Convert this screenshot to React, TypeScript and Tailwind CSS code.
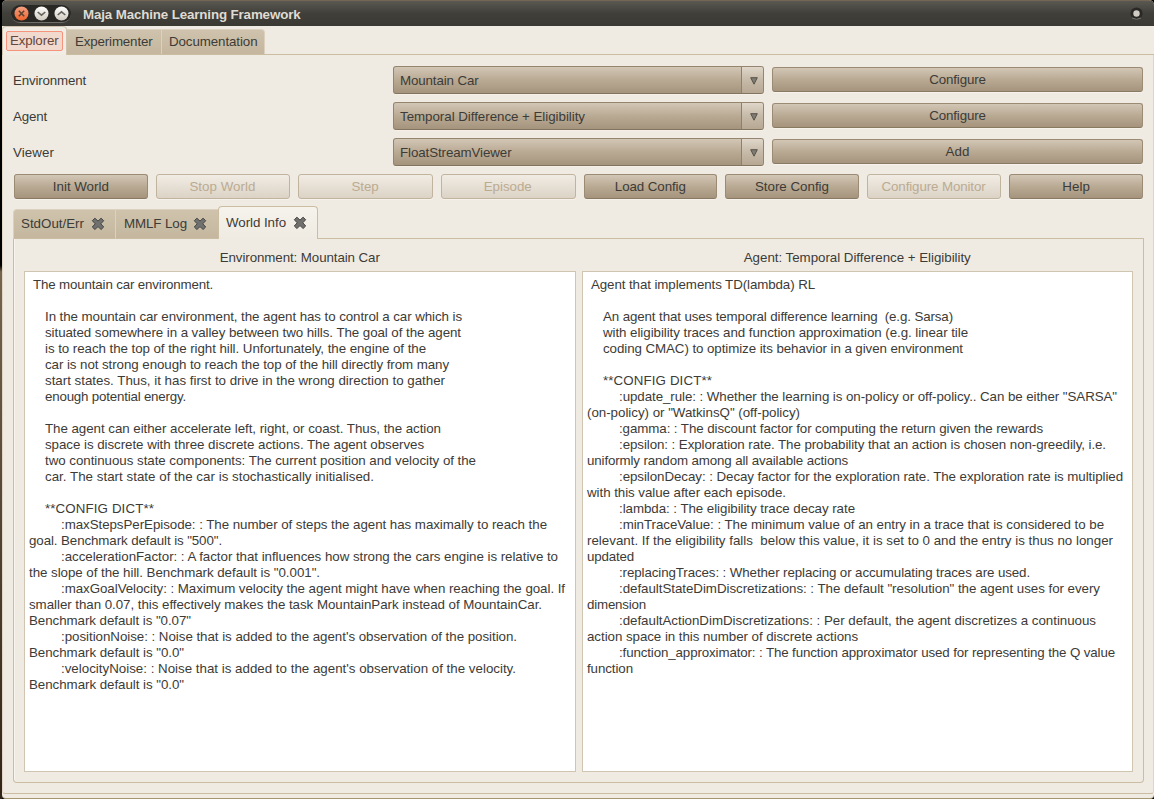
import React, { useLayoutEffect, useRef } from "react";

const envText: [string, number][] = [
  [" The mountain car environment.", 213],
  ["", 0],
  ["    In the mountain car environment, the agent has to control a car which is", 462],
  ["    situated somewhere in a valley between two hills. The goal of the agent", 461],
  ["    is to reach the top of the right hill. Unfortunately, the engine of the", 426],
  ["    car is not strong enough to reach the top of the hill directly from many", 449],
  ["    start states. Thus, it has first to drive in the wrong direction to gather", 445],
  ["    enough potential energy.", 186],
  ["", 0],
  ["    The agent can either accelerate left, right, or coast. Thus, the action", 441],
  ["    space is discrete with three discrete actions. The agent observes", 424],
  ["    two continuous state components: The current position and velocity of the", 476],
  ["    car. The start state of the car is stochastically initialised.", 374],
  ["", 0],
  ["    **CONFIG DICT**", 154],
  ["        :maxStepsPerEpisode: : The number of steps the agent has maximally to reach the", 547],
  ['goal. Benchmark default is "500".', 222],
  ["        :accelerationFactor: : A factor that influences how strong the cars engine is relative to", 558],
  ['the slope of the hill. Benchmark default is "0.001".', 320],
  ["        :maxGoalVelocity: : Maximum velocity the agent might have when reaching the goal. If", 565],
  ["smaller than 0.07, this effectively makes the task MountainPark instead of MountainCar.", 542],
  ['Benchmark default is "0.07"', 191],
  ["        :positionNoise: : Noise that is added to the agent's observation of the position.", 517],
  ['Benchmark default is "0.0"', 184],
  ["        :velocityNoise: : Noise that is added to the agent's observation of the velocity.", 516],
  ['Benchmark default is "0.0"', 184],
];

const agentText: [string, number][] = [
  [" Agent that implements TD(lambda) RL", 815],
  ["", 0],
  ["    An agent that uses temporal difference learning  (e.g. Sarsa)", 953],
  ["    with eligibility traces and function approximation (e.g. linear tile", 968],
  ["    coding CMAC) to optimize its behavior in a given environment", 963],
  ["", 0],
  ["    **CONFIG DICT**", 712],
  ['        :update_rule: : Whether the learning is on-policy or off-policy.. Can be either "SARSA"', 1117],
  ['(on-policy) or "WatkinsQ" (off-policy)', 800],
  ["        :gamma: : The discount factor for computing the return given the rewards", 1043],
  ["        :epsilon: : Exploration rate. The probability that an action is chosen non-greedily, i.e.", 1106],
  ["uniformly random among all available actions", 848],
  ["        :epsilonDecay: : Decay factor for the exploration rate. The exploration rate is multiplied", 1123],
  ["with this value after each episode.", 786],
  ["        :lambda: : The eligibility trace decay rate", 855],
  ["        :minTraceValue: : The minimum value of an entry in a trace that is considered to be", 1104],
  ["relevant. If the eligibility falls  below this value, it is set to 0 and the entry is thus no longer", 1113],
  ["updated", 634],
  ["        :replacingTraces: : Whether replacing or accumulating traces are used.", 1030],
  ['        :defaultStateDimDiscretizations: : The default "resolution" the agent uses for every', 1100],
  ["dimension", 646],
  ["        :defaultActionDimDiscretizations: : Per default, the agent discretizes a continuous", 1096],
  ["action space in this number of discrete actions", 858],
  ["        :function_approximator: : The function approximator used for representing the Q value", 1115],
  ["function", 633],
];

/* A run of text whose tracking is adjusted so that it spans the given width. */
function Fit({ width, children }: { width: number; children: string }) {
  const ref = useRef<HTMLSpanElement>(null);
  useLayoutEffect(() => {
    const el = ref.current;
    if (!el) return;
    el.style.letterSpacing = "0px";
    const natural = el.getBoundingClientRect().width;
    el.style.letterSpacing = (width - natural) / children.length + "px";
  }, [width, children]);
  return (
    <span ref={ref} className="inline-block whitespace-pre">
      {children}
    </span>
  );
}

function TextPane({ lines, left, className }: { lines: [string, number][]; left: number; className: string }) {
  return (
    <div className={"h-[501px] shrink-0 border border-[#cfc5b1] bg-white pl-1 pt-[5px] text-[#3c3b37] " + className}>
      {lines.map(([text, right], i) => {
        const body = text.trimStart();
        const indent = (text.length - body.length) * 4;
        return (
          <div key={i} className="h-4 leading-4" style={{ paddingLeft: indent }}>
            {body && <Fit width={right - left - indent}>{body}</Fit>}
          </div>
        );
      })}
    </div>
  );
}

function Combo({ children }: { children: React.ReactNode }) {
  return (
    <div className="flex h-7 w-[371px] overflow-hidden rounded-[3px] border border-[#95856f] border-b-[#83745f] bg-linear-to-b from-[#d2c6b5] via-[#b9aa94] to-[#a6947d] shadow-[0_1px_0_#f5f1e9]">
      <span className="flex-1 pl-1.5 leading-[27px]">{children}</span>
      <span className="flex w-[22px] items-center justify-center border-l border-[#8f806b] bg-linear-to-b from-[#e0d7ca] via-[#c6baa8] to-[#b7a893] pl-0.5 pt-px">
        <svg width="8" height="8" viewBox="0 0 8 8">
          <path d="M.7.7h6.6L4 7.2z" fill="#817b72" stroke="#56524a" strokeWidth="1" />
        </svg>
      </span>
    </div>
  );
}

function Btn({ children, disabled, className = "" }: { children: React.ReactNode; disabled?: boolean; className?: string }) {
  return (
    <button
      className={
        "h-[25px] rounded-[3px] border text-center leading-[22px] shadow-[0_1px_0_#f7f3ec] " +
        (disabled
          ? "border-[#c1b49e] bg-linear-to-b from-[#f1ece4] to-[#dcd3c6] pr-px text-[#bbab91] "
          : "border-[#9b8b75] border-b-[#887963] bg-linear-to-b from-[#d2c6b5] via-[#b9aa94] to-[#a6947d] ") +
        className
      }
    >
      {children}
    </button>
  );
}

function CloseIcon() {
  return (
    <svg width="14" height="14" viewBox="0 0 14 14" className="shrink-0">
      <path
        d="M3.9 1.2 7 4.1l3.1-2.9 2.6 2.5-2.9 3.1 2.9 3.2-2.6 2.5L7 9.6l-3.1 2.9L1.3 10l2.9-3.2-2.9-3.1z"
        fill="#70706f"
        stroke="#464645"
        strokeWidth="1"
        strokeLinejoin="round"
      />
    </svg>
  );
}

const rows: [string, number, string, number, string][] = [
  ["Environment", 73, "Mountain Car", 78.5, "Configure"],
  ["Agent", 34, "Temporal Difference + Eligibility", 185, "Configure"],
  ["Viewer", 41, "FloatStreamViewer", 111.5, "Add"],
];

const actions: [string, number, boolean][] = [
  ["Init World", 56, false],
  ["Stop World", 66, true],
  ["Step", 27, true],
  ["Episode", 48, true],
  ["Load Config", 71, false],
  ["Store Config", 74, false],
  ["Configure Monitor", 104, true],
  ["Help", 28, false],
];

export default function App() {
  return (
    <div className="flex h-[799px] w-[1154px] overflow-hidden bg-black font-['Liberation_Sans',sans-serif] text-[13.333px] text-[#3c3b37]">
      <div className="w-0.5 shrink-0 bg-linear-to-b from-black from-[33%] via-[#75654f] via-[34%] to-[#302517]" />
      <div className="flex w-[1152px] flex-col overflow-hidden rounded-t-[5px] rounded-b-[4px] border-b border-[#a5966f] bg-[#efebe3]">
        <header className="flex h-[26px] shrink-0 items-center border-t border-[#736754] bg-linear-to-b from-[#5a5851] via-[#403f3a] via-50% to-[#3a3934]">
          <div className="ml-[9px] mt-px flex h-[18px] w-[60px] items-center gap-[5px] rounded-full border-b border-[#716f69] bg-[#292825] pl-[2.5px]">
            <svg width="15" height="15" viewBox="0 0 15 15">
              <defs>
                <linearGradient id="orange" x2="0" y2="1">
                  <stop stopColor="#f5a184" />
                  <stop offset="1" stopColor="#ec642b" />
                </linearGradient>
                <linearGradient id="silver" x2="0" y2="1">
                  <stop stopColor="#fff" />
                  <stop offset="1" stopColor="#cfcabf" />
                </linearGradient>
              </defs>
              <circle cx="7.5" cy="7.5" r="7" fill="url(#orange)" />
              <path d="m4.8 4.8 5.4 5.4m0-5.4-5.4 5.4" stroke="#59402f" strokeWidth="1.5" />
            </svg>
            <svg width="15" height="15" viewBox="0 0 15 15">
              <circle cx="7.5" cy="7.5" r="7" fill="url(#silver)" />
              <path d="m3.7 6 3.8 3.2L11.3 6" fill="none" stroke="#65625b" strokeWidth="1.6" />
            </svg>
            <svg width="15" height="15" viewBox="0 0 15 15">
              <circle cx="7.5" cy="7.5" r="7" fill="url(#silver)" />
              <path d="m3.7 9 3.8-3.2L11.3 9" fill="none" stroke="#65625b" strokeWidth="1.6" />
            </svg>
          </div>
          <h1 className="ml-3 mt-0.5 font-bold leading-4 text-[#dfdbd2]">
            <Fit width={217.5}>Maja Machine Learning Framework</Fit>
          </h1>
          <svg className="ml-auto mr-[11.5px]" width="13" height="13" viewBox="0 0 13 13">
            <circle cx="6.5" cy="6.5" r="6" fill="#292825" />
            <path d="M2 11q4.5 2.6 9 0" fill="none" stroke="#77756f" />
            <circle cx="6.5" cy="6.5" r="3.2" fill="#d0ccc3" />
          </svg>
        </header>

        <nav className="flex h-[29px] shrink-0">
          <div className="z-10 h-[29px] w-[65px] shrink-0 rounded-t-[4px] border-x border-t border-[#d0c3ad] bg-[#f1ede5] pl-[3px] pt-1">
            <div className="h-[20px] w-[57px] rounded-[2px] border border-[#f6937c] bg-[#f2d9cd] pl-[3px] leading-[18px] text-[#66473b]">
              <Fit width={48.5}>Explorer</Fit>
            </div>
          </div>
          <div className="flex flex-1 items-end border-b border-[#cbbda2]">
            <div className="h-[25px] w-[94px] border-t border-[#dbd1be] bg-linear-to-b from-[#cfc3ad] to-[#c5b79e] pl-2 leading-[24px]">
              <Fit width={77.5}>Experimenter</Fit>
            </div>
            <div className="h-[25px] w-[104px] rounded-tr-[4px] border-x border-t border-[#dbd1be] bg-linear-to-b from-[#cfc3ad] to-[#c5b79e] pl-[7px] leading-[24px]">
              <Fit width={88.5}>Documentation</Fit>
            </div>
          </div>
        </nav>

        <main className="flex h-[739px] shrink-0 flex-col rounded-b-[3px] border-x border-b border-x-[#e0d6c6] border-b-[#cbbda2] px-2.5 pt-[11px]">
          <section className="flex flex-col gap-2">
            {rows.map(([label, labelWidth, value, valueWidth, button]) => (
              <div key={label} className="flex h-7">
                <label className="w-[380px] leading-[29px]">
                  <Fit width={labelWidth}>{label}</Fit>
                </label>
                <Combo>
                  <Fit width={valueWidth}>{value}</Fit>
                </Combo>
                <Btn className="ml-2 mt-px w-[371px]">
                  <Fit width={button === "Add" ? 24 : 56.5}>{button}</Fit>
                </Btn>
              </div>
            ))}
          </section>
          <section className="ml-px mt-2 flex w-[1129px] gap-2">
            {actions.map(([label, width, disabled]) => (
              <Btn key={label} disabled={disabled} className="flex-1 whitespace-nowrap">
                <Fit width={width}>{label}</Fit>
              </Btn>
            ))}
          </section>

          <section className="mt-[7px] flex h-[33px] w-[1131px] shrink-0 items-end">
            <div className="flex h-[30px] w-[103px] items-center gap-[7px] rounded-tl-[4px] border border-[#dbd1be] border-b-[#cbbda2] bg-linear-to-b from-[#cfc3ad] to-[#c5b79e] pl-[7px]">
              <Fit width={63}>StdOut/Err</Fit>
              <CloseIcon />
            </div>
            <div className="flex h-[30px] w-[102px] items-center gap-[6px] border-y border-t-[#dbd1be] border-b-[#cbbda2] bg-linear-to-b from-[#cfc3ad] to-[#c5b79e] pl-2">
              <Fit width={63}>MMLF Log</Fit>
              <CloseIcon />
            </div>
            <div className="flex h-[33px] w-[100px] items-center gap-[7px] rounded-t-[4px] border-x border-t border-[#cbbda2] bg-linear-to-b from-[#f6f3ec] to-[#efebe3] pl-[7px]">
              <Fit width={60}>World Info</Fit>
              <CloseIcon />
            </div>
            <div className="flex-1 self-stretch border-b border-[#cbbda2]" />
          </section>
          <section className="flex h-[544px] w-[1131px] shrink-0 flex-col rounded-b-[4px] border-x border-b border-[#cbbda2] px-2.5 shadow-[inset_1px_0_0_#f8f4ed]">
            <div className="flex h-[32px] gap-1.5 pt-[11px] text-center leading-4">
              <h2 className="flex-1">
                <Fit width={160}>Environment: Mountain Car</Fit>
              </h2>
              <h2 className="flex-1">
                <Fit width={227}>Agent: Temporal Difference + Eligibility</Fit>
              </h2>
            </div>
            <div className="flex gap-1.5">
              <TextPane lines={envText} left={29} className="w-[552px]" />
              <TextPane lines={agentText} left={587} className="w-[551px]" />
            </div>
          </section>
        </main>
      </div>
    </div>
  );
}
